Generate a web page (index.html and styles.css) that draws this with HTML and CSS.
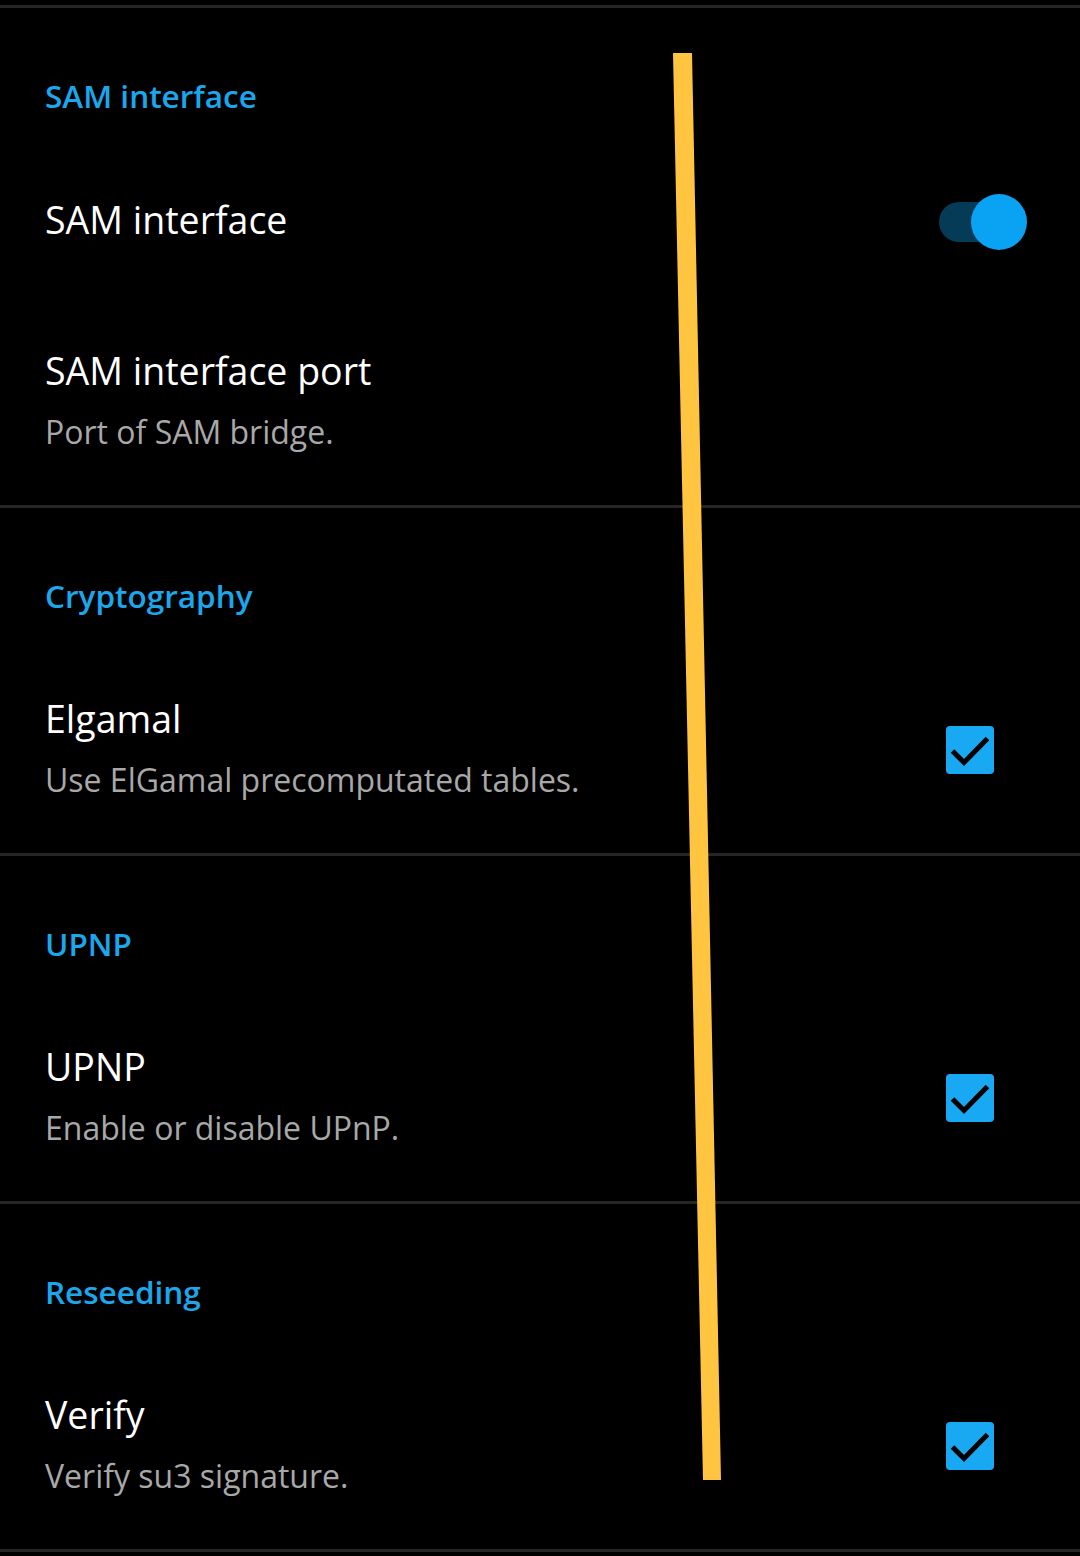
FILE: index.html
```html
<!DOCTYPE html>
<html>
<head>
<meta charset="utf-8">
<link rel="stylesheet" href="styles.css">
</head>
<body>
<div class="page">
  <div class="divider"></div>
  <section class="category">
    <div class="cat-title">SAM interface</div>
    <div class="item single">
      <div class="texts"><div class="title">SAM interface</div></div>
      <div class="switch"><div class="track"></div><div class="thumb"></div></div>
    </div>
    <div class="item">
      <div class="texts">
        <div class="title">SAM interface port</div>
        <div class="summary">Port of SAM bridge.</div>
      </div>
    </div>
  </section>
  <div class="divider"></div>
  <section class="category">
    <div class="cat-title">Cryptography</div>
    <div class="item">
      <div class="texts">
        <div class="title">Elgamal</div>
        <div class="summary">Use ElGamal precomputated tables.</div>
      </div>
      <div class="check"><svg viewBox="0 0 48 48" width="48" height="48"><rect x="0" y="0" width="48" height="48" rx="4" fill="#19a9f2"/><path d="M6.5 25 L18 36.5 L41.5 12.5" fill="none" stroke="#000" stroke-width="5"/></svg></div>
    </div>
  </section>
  <div class="divider"></div>
  <section class="category">
    <div class="cat-title">UPNP</div>
    <div class="item">
      <div class="texts">
        <div class="title">UPNP</div>
        <div class="summary">Enable or disable UPnP.</div>
      </div>
      <div class="check"><svg viewBox="0 0 48 48" width="48" height="48"><rect x="0" y="0" width="48" height="48" rx="4" fill="#19a9f2"/><path d="M6.5 25 L18 36.5 L41.5 12.5" fill="none" stroke="#000" stroke-width="5"/></svg></div>
    </div>
  </section>
  <div class="divider"></div>
  <section class="category">
    <div class="cat-title">Reseeding</div>
    <div class="item">
      <div class="texts">
        <div class="title">Verify</div>
        <div class="summary">Verify su3 signature.</div>
      </div>
      <div class="check"><svg viewBox="0 0 48 48" width="48" height="48"><rect x="0" y="0" width="48" height="48" rx="4" fill="#19a9f2"/><path d="M6.5 25 L18 36.5 L41.5 12.5" fill="none" stroke="#000" stroke-width="5"/></svg></div>
    </div>
  </section>
  <div class="divider"></div>
  <svg class="annotation" width="1080" height="1556" viewBox="0 0 1080 1556"><polygon points="673,53 692,53 721,1480 703,1480" fill="#ffc440"/></svg>
</div>
</body>
</html>
```
FILE: styles.css
```css
html, body {
  margin: 0;
  padding: 0;
  background: #000;
}
.page {
  position: relative;
  width: 1080px;
  height: 1556px;
  padding-top: 5px;
  box-sizing: border-box;
  background: #000;
  font-family: "Open Sans", "Noto Sans", sans-serif;
  overflow: hidden;
}
.divider {
  height: 3px;
  background: #262626;
}
.category {
  display: flex;
  flex-direction: column;
}
.cat-title {
  height: 138px;
  box-sizing: border-box;
  padding: 63px 0 0 45px;
  line-height: 50px;
  font-size: 31.5px;
  font-weight: 600;
  color: #1ba7ec;
}
.item {
  height: 207px;
  display: flex;
  align-items: center;
  padding: 0 86px 0 45px;
}
.item.single {
  height: 152px;
  padding-right: 53px;
}
.texts {
  flex: 1;
}
.title {
  font-size: 37.5px;
  line-height: 59px;
  color: #fff;
  margin-top: -2px;
  padding-bottom: 2px;
}
.item.single .title {
  margin-top: -3px;
  padding-bottom: 3px;
}
.summary {
  font-size: 32px;
  line-height: 59px;
  color: #a8a8a8;
}
.switch {
  position: relative;
  width: 88px;
  height: 56px;
}
.track {
  position: absolute;
  left: 0;
  top: 8px;
  width: 80px;
  height: 40px;
  border-radius: 20px;
  background: #053b57;
}
.thumb {
  position: absolute;
  right: 0;
  top: 0;
  width: 56px;
  height: 56px;
  border-radius: 50%;
  background: #0aa3f4;
}
.check {
  width: 48px;
  height: 48px;
  display: flex;
}
.annotation {
  position: absolute;
  left: 0;
  top: 0;
  pointer-events: none;
}
```
